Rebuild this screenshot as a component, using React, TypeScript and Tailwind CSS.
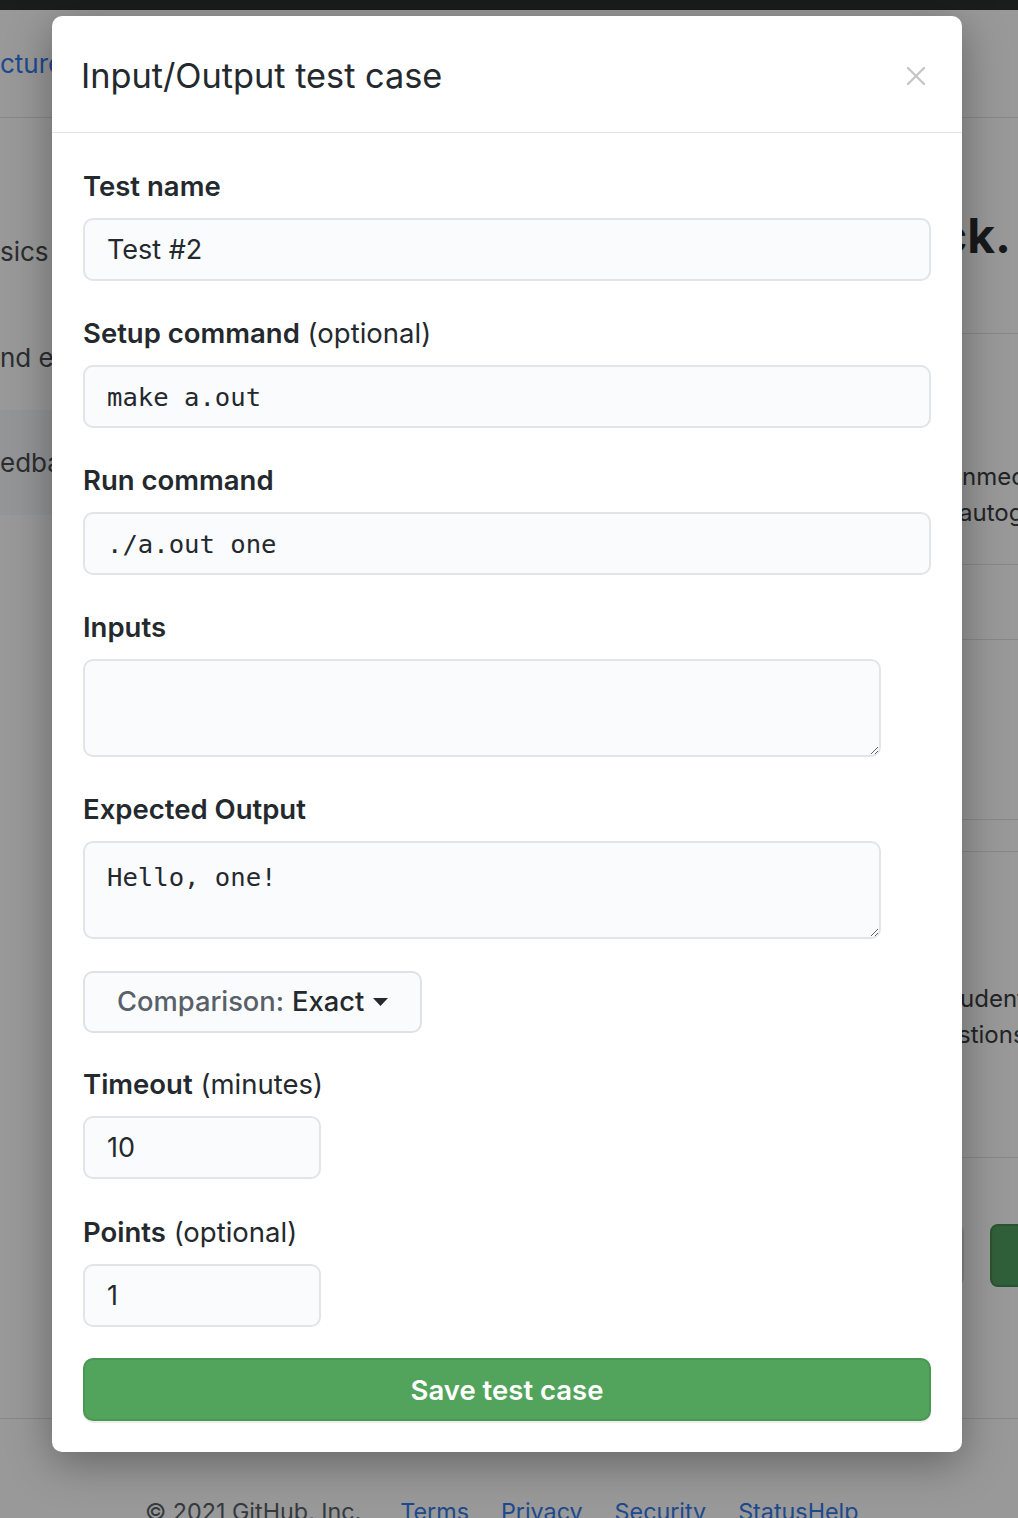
import React from 'react';

const inputBase =
  'block h-[63px] rounded-[10px] border-2 border-[#e1e4e8] bg-[#fafbfc] px-[22px] leading-[32px] text-[#24292e] outline-none';

function FieldLabel({ title, hint }: { title: string; hint?: string }) {
  return (
    <label className="mb-4 block text-[27.5px] font-semibold leading-[32px] text-[#24292e]">
      {title}
      {hint && <span className="font-normal"> {hint}</span>}
    </label>
  );
}

function CloseIcon() {
  return (
    <svg width="18" height="18" viewBox="0 0 18 18" fill="none">
      <path d="M1 1L17 17M17 1L1 17" stroke="#c6c6c6" strokeWidth="2.4" strokeLinecap="round" />
    </svg>
  );
}

function Caret() {
  return (
    <svg width="15" height="8" viewBox="0 0 15 8" className="ml-[9px]">
      <path d="M0 0H15L7.5 8Z" fill="#24292e" />
    </svg>
  );
}

function TestCaseModal() {
  return (
    <div className="absolute left-[52px] top-[16px] w-[910px] rounded-[10px] bg-white shadow-[0_10px_44px_rgba(0,0,0,0.35)]">
      <div className="flex items-center justify-between border-b border-[#e1e4e8] pb-[36px] pl-[29px] pr-[37px] pt-[40px]">
        <h2 className="text-[34.3px] font-normal leading-[40px] text-[#24292e]">Input/Output test case</h2>
        <button className="flex h-[18px] w-[18px] items-center justify-center">
          <CloseIcon />
        </button>
      </div>

      <div className="px-[31px] pb-[31px] pt-[37px]">
        <div className="mb-[36px]">
          <FieldLabel title="Test name" />
          <input className={`${inputBase} w-full text-[27px]`} defaultValue="Test #2" />
        </div>

        <div className="mb-[36px]">
          <FieldLabel title="Setup command" hint="(optional)" />
          <input
            className={`${inputBase} w-full font-['DejaVu_Sans_Mono',monospace] text-[25.6px]`}
            defaultValue="make a.out"
          />
        </div>

        <div className="mb-[36px]">
          <FieldLabel title="Run command" />
          <input
            className={`${inputBase} w-full font-['DejaVu_Sans_Mono',monospace] text-[25.6px]`}
            defaultValue="./a.out one"
          />
        </div>

        <div className="mb-[36px]">
          <FieldLabel title="Inputs" />
          <textarea className="block h-[98px] w-[798px] rounded-[10px] border-2 border-[#e1e4e8] bg-[#fafbfc] px-[22px] pt-[18px] font-['DejaVu_Sans_Mono',monospace] text-[25.6px] leading-[32px] text-[#24292e] outline-none" />
        </div>

        <div className="mb-[32px]">
          <FieldLabel title="Expected Output" />
          <textarea
            className="block h-[98px] w-[798px] rounded-[10px] border-2 border-[#e1e4e8] bg-[#fafbfc] px-[22px] pt-[18px] font-['DejaVu_Sans_Mono',monospace] text-[25.6px] leading-[32px] text-[#24292e] outline-none"
            defaultValue="Hello, one!"
          />
        </div>

        <div className="mb-[35px]">
          <button className="inline-flex h-[62px] items-center rounded-[10px] border-2 border-[#dfe2e5] bg-[#fafbfc] px-[32px] text-[27.3px] font-medium leading-[32px]">
            <span className="text-[#586069]">Comparison:</span>
            <span className="ml-[8px] text-[#24292e]">Exact</span>
            <Caret />
          </button>
        </div>

        <div className="mb-[37px]">
          <FieldLabel title="Timeout" hint="(minutes)" />
          <input className={`${inputBase} w-[238px] text-[27px]`} defaultValue="10" />
        </div>

        <div className="mb-[31px]">
          <FieldLabel title="Points" hint="(optional)" />
          <input className={`${inputBase} w-[238px] text-[27px]`} defaultValue="1" />
        </div>

        <button className="block h-[63px] w-full rounded-[10px] border-2 border-[#4b9653] bg-[#52a35b] text-[27.5px] font-semibold leading-[32px] text-white shadow-[0_2px_0_rgba(27,31,35,0.08)]">
          Save test case
        </button>
      </div>
    </div>
  );
}

function BackgroundPage() {
  return (
    <div className="flex h-full flex-col bg-[#999999]">
      <div className="h-[10px] bg-[#1b1c1c]" />

      {/* page header strip */}
      <div className="flex h-[108px] items-center border-b border-[#878889]">
        <span className="whitespace-nowrap text-[26px] leading-[32px] text-[#1d4a8e]">cture</span>
      </div>

      <div className="grid flex-1 grid-cols-[52px_1fr_56px]">
        {/* sidebar, mostly under the modal */}
        <aside className="overflow-hidden pt-[81px] text-[26px] leading-[32px] text-[#2b2d30]">
          <div className="flex h-[106px] items-center whitespace-nowrap">sics</div>
          <div className="flex h-[105px] items-center whitespace-nowrap">nd errors</div>
          <div className="flex h-[105px] items-center whitespace-nowrap bg-[#949596]">edback</div>
        </aside>

        <main />

        {/* main column, right edge visible */}
        <section className="overflow-hidden">
          <div className="h-[216px] border-b border-[#878889] pt-[90px]">
            <div className="-ml-[23px] whitespace-nowrap text-[48px] font-bold leading-[56px] text-[#17191b]">ck.</div>
          </div>
          <div className="h-[231px] border-b border-[#878889] pt-[125px] text-[24px] leading-[36px] text-[#222426]">
            <div className="whitespace-nowrap">nmect</div>
            <div className="-ml-[3px] whitespace-nowrap">autograding</div>
          </div>
          <div className="h-[75px] border-b border-[#878889]" />
          <div className="h-[180px] border-b border-[#878889]" />
          <div className="h-[32px] border-b border-[#878889]" />
          <div className="h-[306px] border-b border-[#878889] pt-[129px] text-[24px] leading-[36px] text-[#222426]">
            <div className="-ml-[2px] whitespace-nowrap">udents</div>
            <div className="-ml-[4px] whitespace-nowrap">stions</div>
          </div>
          <div className="flex pt-[66px]">
            <div className="-ml-[98px] h-[62px] w-[100px] shrink-0 rounded-[8px] border-2 border-[#858687] bg-[#959595]" />
            <div className="ml-[26px] h-[63px] w-[60px] shrink-0 rounded-[8px] border-2 border-[#2a5430] bg-[#30603a]" />
          </div>
        </section>
      </div>

      <footer className="flex h-[100px] shrink-0 gap-[32px] border-t border-[#878889] pl-[145px] pt-[77px] text-[23.3px] leading-[32px]">
        <span className="mr-[7px] whitespace-nowrap text-[#353a3f]">© 2021 GitHub, Inc.</span>
        <span className="text-[#1d4a8e]">Terms</span>
        <span className="text-[#1d4a8e]">Privacy</span>
        <span className="text-[#1d4a8e]">Security</span>
        <span className="text-[#1d4a8e]">StatusHelp</span>
      </footer>
    </div>
  );
}

export default function App() {
  return (
    <div className="relative h-[1518px] w-[1018px] overflow-hidden font-['Inter','Liberation_Sans',sans-serif]">
      <BackgroundPage />
      <TestCaseModal />
    </div>
  );
}
